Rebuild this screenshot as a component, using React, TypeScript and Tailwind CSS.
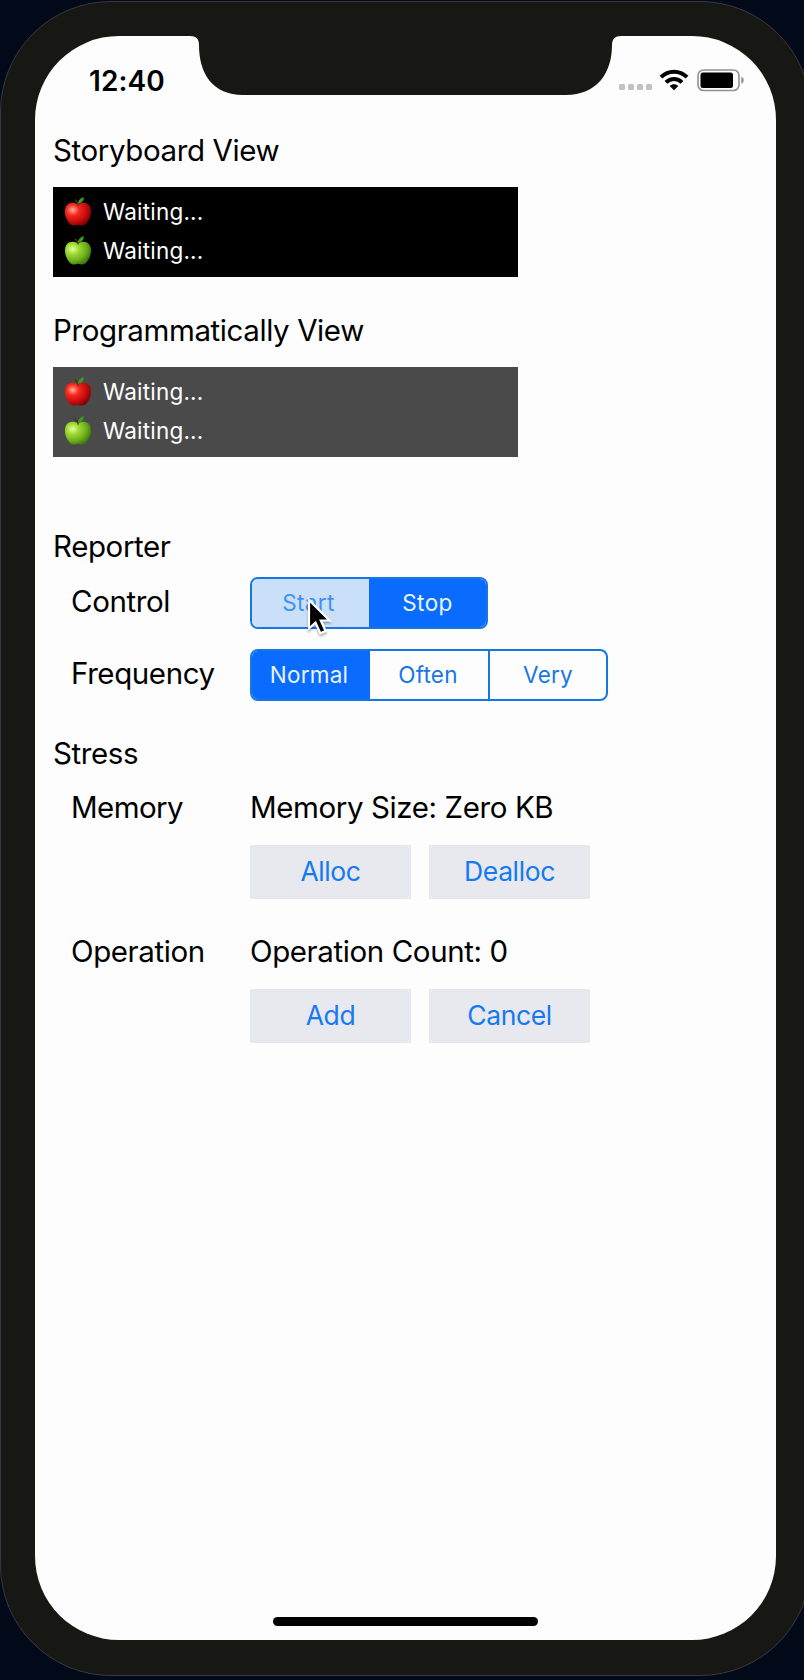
import type { ReactNode } from "react";

function Apple({ tone }: { tone: "red" | "green" }) {
  const id = `apple-${tone}`;
  const stops =
    tone === "red" ? ["#ffb09a", "#f5281f", "#c80d0d", "#6e0000"] : ["#e6ffa0", "#9fd832", "#6db01c", "#2f6a08"];
  return (
    <svg width="28" height="30" viewBox="0 0 28 30" className="shrink-0">
      <defs>
        <radialGradient id={id} cx="0.3" cy="0.32" r="0.8">
          <stop offset="0" stopColor={stops[0]} />
          <stop offset="0.3" stopColor={stops[1]} />
          <stop offset="0.65" stopColor={stops[2]} />
          <stop offset="1" stopColor={stops[3]} />
        </radialGradient>
      </defs>
      <path
        d="M14 7.2C17 5.4 22 4.6 25 8c3 3.600 2.400 10.500-0.200 15-1.600 2.900-3.500 5.500-6 5.600-1.800 0-3-.9-4.800-.9s-3 .9-4.800.9C6.700 28.500 4.800 25.900 3.200 23 .6 18.500 0 11.600 3 8c3-3.400 8-2.600 11-.8z"
        fill={`url(#${id})`}
      />
      <path d="M14.300 8.500C13.900 6 12.800 4 10.800 2.600" stroke="#5b2a12" strokeWidth="1.300" fill="none" />
      <path d="M13.800 6.800C14 3.500 16.500.8 19.800.2c.2 3.200-2 6.200-6 6.600z" fill="#3f9a1e" />
    </svg>
  );
}

function StatusPanel({ className }: { className: string }) {
  return (
    <div className={`flex h-[90px] w-[465px] flex-col pt-[5px] pr-3 pl-[11px] text-white ${className}`}>
      {(["red", "green"] as const).map((tone) => (
        <div key={tone} className="flex h-[39.5px] items-center gap-[11px]">
          <Apple tone={tone} />
          <span className="text-[22.5px] leading-7 tracking-[0.2px]">Waiting...</span>
        </div>
      ))}
    </div>
  );
}

function Label({ children, className = "" }: { children: ReactNode; className?: string }) {
  return <div className={`h-9 text-[29.5px] leading-9 tracking-[-0.4px] whitespace-nowrap ${className}`}>{children}</div>;
}

function ActionButton({ children }: { children: ReactNode }) {
  return (
    <button className="h-[54px] w-[161px] bg-[#e8e8ef] text-[26.5px] tracking-[-0.4px] text-[#147aef]">{children}</button>
  );
}

function WifiIcon() {
  return (
    <svg width="30" height="22" viewBox="0 0 30 22">
      <path d="M2 8.200C9.200.9 20.800.9 28 8.200" fill="none" stroke="#000" strokeWidth="4" />
      <path d="M7 13.400c4.600-4.500 11.400-4.500 16 0" fill="none" stroke="#000" strokeWidth="4" />
      <path d="M15 21.200l-4.300-4.300c2.500-2.200 6.100-2.200 8.600 0z" fill="#000" />
    </svg>
  );
}

function BatteryIcon() {
  return (
    <svg width="48" height="23" viewBox="0 0 48 23">
      <rect x="1" y="1" width="41" height="20.500" rx="5.500" fill="none" stroke="#92928e" strokeWidth="1.600" />
      <rect x="3.500" y="3.500" width="32.500" height="15.500" rx="2.500" fill="#000" />
      <path d="M44.300 7.800c3.200.8 3.200 6.200 0 7z" fill="#92928e" />
    </svg>
  );
}

export default function App() {
  return (
    <div className="h-[1680px] w-[804px] overflow-hidden bg-[#020a1a] pt-px font-['Inter',sans-serif] text-black">
      <div className="h-[1675px] w-[811px] rounded-[111px] border border-[#383840] bg-[#171713] pt-[34px] pl-[34px]">
        <main className="relative flex h-[1604px] w-[741px] flex-col rounded-[84px] bg-[#fdfdfd]">
          <svg className="absolute top-0 left-[155px]" width="431" height="59" viewBox="0 0 431 59">
            <path
              d="M0-1V0C6 0 9 3 9 9C9 38 23 59 53 59H376C406 59 422 38 422 9C422 3 425 0 431 0V-1Z"
              fill="#171713"
            />
          </svg>

          <header className="flex h-24 items-start justify-between pr-[31px] pl-[54px]">
            <time className="mt-[27px] text-[28px] leading-9 font-semibold tracking-[0.1px]">12:40</time>
            <div className="mt-[33px] flex items-start">
              <div className="mt-[15px] mr-[7px] flex gap-[3px]">
                {[0, 1, 2, 3].map((dot) => (
                  <span key={dot} className="size-1.5 rounded-[1.5px] bg-[#c1c1bd]" />
                ))}
              </div>
              <WifiIcon />
              <div className="ml-2">
                <BatteryIcon />
              </div>
            </div>
          </header>

          <section className="pl-[18px]">
            <Label>Storyboard View</Label>
            <StatusPanel className="mt-[19px] bg-black" />
            <Label className="mt-[35px]">Programmatically View</Label>
            <StatusPanel className="mt-[19px] bg-[#4a4a4a]" />
          </section>

          <section className="mt-[71px] pl-[18px]">
            <Label>Reporter</Label>
            <div className="mt-[13px] flex h-[52px] pl-[18px]">
              <Label className="-mt-px w-[179px] pt-[7px]">Control</Label>
              <div className="flex h-[52px] w-[238px] overflow-hidden rounded-[8px] border-2 border-[#1677e4] text-[22.5px] tracking-[0.4px]">
                <button className="w-[117px] bg-[#c9e0f8] pr-1 text-[#3f91f3]">Start</button>
                <button className="flex-1 bg-[#0a6cff] text-[#e9f4ff]">Stop</button>
              </div>
            </div>
            <div className="mt-5 flex h-[52px] pl-[18px]">
              <Label className="w-[179px] pt-1.5">Frequency</Label>
              <div className="flex h-[52px] w-[358px] overflow-hidden rounded-[8px] border-2 border-[#1677e4] text-[22.5px] tracking-[0.2px] text-[#1677e4]">
                <button className="w-[118px] bg-[#0a6cff] pr-1 text-[#e9f4ff]">Normal</button>
                <button className="w-[120px] border-r-2 border-[#1677e4] pr-0.5">Often</button>
                <button className="flex-1">Very</button>
              </div>
            </div>
          </section>

          <section className="mt-[34px] pl-[18px]">
            <Label>Stress</Label>
            <div className="mt-[18px] flex pl-[18px]">
              <Label className="w-[179px] tracking-[-0.6px]">Memory</Label>
              <div>
                <Label>Memory Size: Zero KB</Label>
                <div className="mt-5 flex gap-[18px]">
                  <ActionButton>Alloc</ActionButton>
                  <ActionButton>Dealloc</ActionButton>
                </div>
              </div>
            </div>
            <div className="mt-[34px] flex pl-[18px]">
              <Label className="w-[179px]">Operation</Label>
              <div>
                <Label>Operation Count: 0</Label>
                <div className="mt-5 flex gap-[18px]">
                  <ActionButton>Add</ActionButton>
                  <ActionButton>Cancel</ActionButton>
                </div>
              </div>
            </div>
          </section>

          <div className="mt-auto mb-[14px] ml-[238px] h-[9px] w-[265px] rounded-full bg-black" />

          <svg className="absolute top-[561px] left-[271px] drop-shadow-[0_2px_1px_rgba(0,0,0,0.3)]" width="26" height="40" viewBox="0 0 26 40">
            <path
              d="M3 3V31.500L9.500 25.500L14.300 36.300L19.600 34L14.800 23.500H23.500Z"
              fill="#000"
              stroke="#fff"
              strokeWidth="2.200"
            />
          </svg>
        </main>
      </div>
    </div>
  );
}
